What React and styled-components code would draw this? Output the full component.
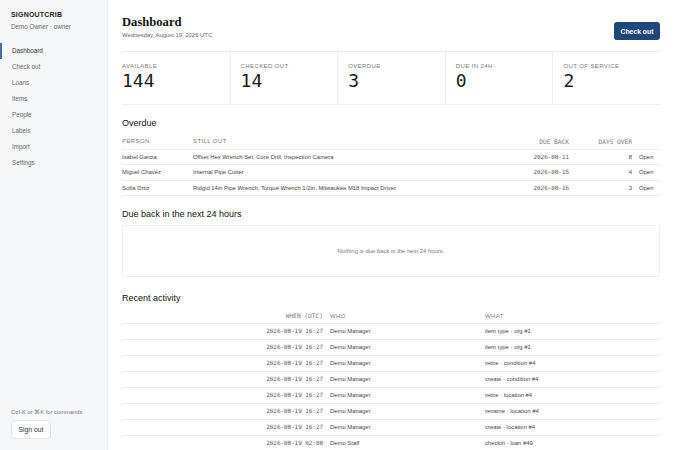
import React from 'react'
import styled, { createGlobalStyle } from 'styled-components'

const GlobalStyle = createGlobalStyle`
  * { box-sizing: border-box; }
  html, body { margin: 0; padding: 0; background: #fff; }
  body {
    font-family: 'Liberation Sans', Arial, sans-serif;
    color: #222;
    overflow: hidden;
  }
`

const navItems = ['Dashboard', 'Check out', 'Loans', 'Items', 'People', 'Labels', 'Import', 'Settings']

const stats = [
  { label: 'Available', value: 144 },
  { label: 'Checked out', value: 14 },
  { label: 'Overdue', value: 3 },
  { label: 'Due in 24h', value: 0 },
  { label: 'Out of service', value: 2 },
]

const overdue = [
  { person: 'Isabel Garcia', items: 'Offset Hex Wrench Set, Core Drill, Inspection Camera', due: '2026-08-11', days: 8 },
  { person: 'Miguel Chavez', items: 'Internal Pipe Cutter', due: '2026-08-15', days: 4 },
  { person: 'Sofia Ortiz', items: 'Ridgid 14in Pipe Wrench, Torque Wrench 1/2in, Milwaukee M18 Impact Driver', due: '2026-08-16', days: 3 },
]

const activity = [
  { when: '2026-08-19 16:27', who: 'Demo Manager', what: 'item type · org #1' },
  { when: '2026-08-19 16:27', who: 'Demo Manager', what: 'item type · org #1' },
  { when: '2026-08-19 16:27', who: 'Demo Manager', what: 'retire · condition #4' },
  { when: '2026-08-19 16:27', who: 'Demo Manager', what: 'create · condition #4' },
  { when: '2026-08-19 16:27', who: 'Demo Manager', what: 'retire · location #4' },
  { when: '2026-08-19 16:27', who: 'Demo Manager', what: 'rename · location #4' },
  { when: '2026-08-19 16:27', who: 'Demo Manager', what: 'create · location #4' },
  { when: '2026-08-19 02:08', who: 'Demo Staff', what: 'checkin · loan #49' },
]

const App = () => {
  return (
    <Layout>
      <GlobalStyle />
      <Sidebar>
        <Brand>SIGNOUTCRIB</Brand>
        <UserLine>Demo Owner · owner</UserLine>
        <Nav>
          {navItems.map(item => (
            <NavItem key={item} $active={item === 'Dashboard'}>{item}</NavItem>
          ))}
        </Nav>
        <SidebarFoot>
          <Hint>Ctrl-K or ⌘K for commands</Hint>
          <GhostButton>Sign out</GhostButton>
        </SidebarFoot>
      </Sidebar>

      <Main>
        <PageHeader>
          <div>
            <Title>Dashboard</Title>
            <DateLine>Wednesday, August 19, 2026 UTC</DateLine>
          </div>
          <PrimaryButton>Check out</PrimaryButton>
        </PageHeader>

        <StatRow>
          {stats.map(s => (
            <StatCell key={s.label}>
              <StatLabel>{s.label}</StatLabel>
              <StatValue>{s.value}</StatValue>
            </StatCell>
          ))}
        </StatRow>

        <Section>
          <SectionTitle>Overdue</SectionTitle>
          <Table>
            <colgroup>
              <col style={{ width: 71 }} />
              <col />
              <col style={{ width: 87 }} />
              <col style={{ width: 63 }} />
              <col style={{ width: 21 }} />
            </colgroup>
            <thead>
              <tr>
                <Th $h={15}>Person</Th>
                <Th $h={15}>Still out</Th>
                <Th $h={15} $mono $right>Due back</Th>
                <Th $h={15} $mono $right>Days over</Th>
                <Th $h={15} />
              </tr>
            </thead>
            <tbody>
              {overdue.map(r => (
                <tr key={r.person}>
                  <Td $h={15.5}>{r.person}</Td>
                  <Td $h={15.5}>{r.items}</Td>
                  <Td $h={15.5} $mono $right>{r.due}</Td>
                  <Td $h={15.5} $right>{r.days}</Td>
                  <Td $h={15.5}><RowLink>Open</RowLink></Td>
                </tr>
              ))}
            </tbody>
          </Table>
        </Section>

        <Section>
          <SectionTitle>Due back in the next 24 hours</SectionTitle>
          <EmptyBox>Nothing is due back in the next 24 hours.</EmptyBox>
        </Section>

        <Section $gap={16}>
          <SectionTitle>Recent activity</SectionTitle>
          <Table>
            <colgroup>
              <col style={{ width: 208 }} />
              <col style={{ width: 155 }} />
              <col />
            </colgroup>
            <thead>
              <tr>
                <Th $mono $right>When (UTC)</Th>
                <Th>Who</Th>
                <Th>What</Th>
              </tr>
            </thead>
            <tbody>
              {activity.map((r, i) => (
                <tr key={i}>
                  <Td $mono $right>{r.when}</Td>
                  <Td>{r.who}</Td>
                  <Td>{r.what}</Td>
                </tr>
              ))}
            </tbody>
          </Table>
        </Section>
      </Main>
    </Layout>
  )
}

export default App

const Layout = styled.div`
  display: flex;
  width: 675px;
  height: 450px;
  overflow: hidden;
`

const Sidebar = styled.aside`
  width: 108px;
  flex-shrink: 0;
  background: #f6f7f9;
  border-right: 1px solid #e6e8eb;
  display: flex;
  flex-direction: column;
  padding: 11px 0 11px;
`

const Brand = styled.div`
  padding-left: 11px;
  font-size: 7px;
  font-weight: 700;
  letter-spacing: 0.2px;
  color: #222;
`

const UserLine = styled.div`
  padding-left: 11px;
  margin-top: 5px;
  font-size: 6.3px;
  color: #666;
`

const Nav = styled.nav`
  margin-top: 13px;
  display: flex;
  flex-direction: column;
`

const NavItem = styled.div`
  height: 16px;
  line-height: 16px;
  padding-left: 10px;
  font-size: 6.3px;
  color: ${p => (p.$active ? '#333' : '#666')};
  border-left: 2px solid ${p => (p.$active ? '#4a6e9a' : 'transparent')};
`

const SidebarFoot = styled.div`
  margin-top: auto;
  padding-left: 11px;
`

const Hint = styled.div`
  font-size: 5.8px;
  color: #777;
`

const GhostButton = styled.button`
  margin-top: 5px;
  width: 40px;
  height: 19px;
  border: 1px solid #e2e4e7;
  border-radius: 3px;
  background: #fff;
  font-family: inherit;
  font-size: 6.8px;
  color: #333;
  padding: 0;
`

const Main = styled.main`
  flex: 1;
  padding: 14px 15px 0 14px;
  overflow: hidden;
`

const PageHeader = styled.div`
  display: flex;
  justify-content: space-between;
  align-items: flex-start;
  padding-top: 1px;
`

const Title = styled.h1`
  margin: 0;
  font-family: 'Liberation Serif', 'Times New Roman', serif;
  font-size: 12.6px;
  font-weight: 700;
  color: #111;
  line-height: 14px;
`

const DateLine = styled.div`
  margin-top: 3px;
  font-size: 5.9px;
  color: #666;
`

const PrimaryButton = styled.button`
  margin-top: 7px;
  width: 46px;
  height: 18px;
  background: #1f477a;
  border: none;
  border-radius: 3px;
  color: #fff;
  font-family: inherit;
  font-size: 6.8px;
  font-weight: 700;
  padding: 0;
`

const StatRow = styled.div`
  margin-top: 11px;
  display: grid;
  grid-template-columns: repeat(5, 1fr);
  border-top: 1px solid #eceef0;
  border-bottom: 1px solid #eceef0;
`

const StatCell = styled.div`
  height: 52px;
  padding: 11px 0 0 0;
  & + & {
    border-left: 1px solid #eceef0;
    padding-left: 10px;
  }
`

const StatLabel = styled.div`
  font-size: 6px;
  color: #777;
  text-transform: uppercase;
  letter-spacing: 0.4px;
`

const StatValue = styled.div`
  margin-top: 2px;
  font-family: 'DejaVu Sans Mono', monospace;
  font-size: 18px;
  color: #1a1a1a;
  line-height: 20px;
`

const Section = styled.section`
  margin-top: ${p => p.$gap || 13}px;
`

const SectionTitle = styled.h2`
  margin: 0 0 6px;
  font-size: 9px;
  font-weight: 400;
  color: #111;
  line-height: 10px;
`

const Table = styled.table`
  width: 100%;
  border-collapse: collapse;
  table-layout: fixed;
`

const Th = styled.th`
  text-align: ${p => (p.$right ? 'right' : 'left')};
  font-weight: 400;
  font-size: ${p => (p.$mono ? '6.2px' : '6px')};
  color: #777;
  text-transform: uppercase;
  letter-spacing: ${p => (p.$mono ? '0' : '0.4px')};
  font-family: ${p => (p.$mono ? "'DejaVu Sans Mono', monospace" : 'inherit')};
  height: ${p => p.$h || 14}px;
  padding: 0 ${p => (p.$right ? '7px' : '0')} 0 0;
  border-bottom: 1px solid #eceef0;
  white-space: nowrap;
`

const Td = styled.td`
  text-align: ${p => (p.$right ? 'right' : 'left')};
  font-size: 5.9px;
  font-family: ${p => (p.$mono ? "'DejaVu Sans Mono', monospace" : 'inherit')};
  color: ${p => (p.$mono ? '#555' : '#444')};
  height: ${p => p.$h || 16}px;
  padding: 0 ${p => (p.$right ? '7px' : '0')} 0 0;
  border-bottom: 1px solid #eceef0;
  white-space: nowrap;
  overflow: hidden;
`

const RowLink = styled.span`
  color: #444;
`

const EmptyBox = styled.div`
  height: 52px;
  border: 1px solid #eceef0;
  border-radius: 3px;
  display: flex;
  align-items: center;
  justify-content: center;
  font-size: 5.9px;
  color: #777;
`
